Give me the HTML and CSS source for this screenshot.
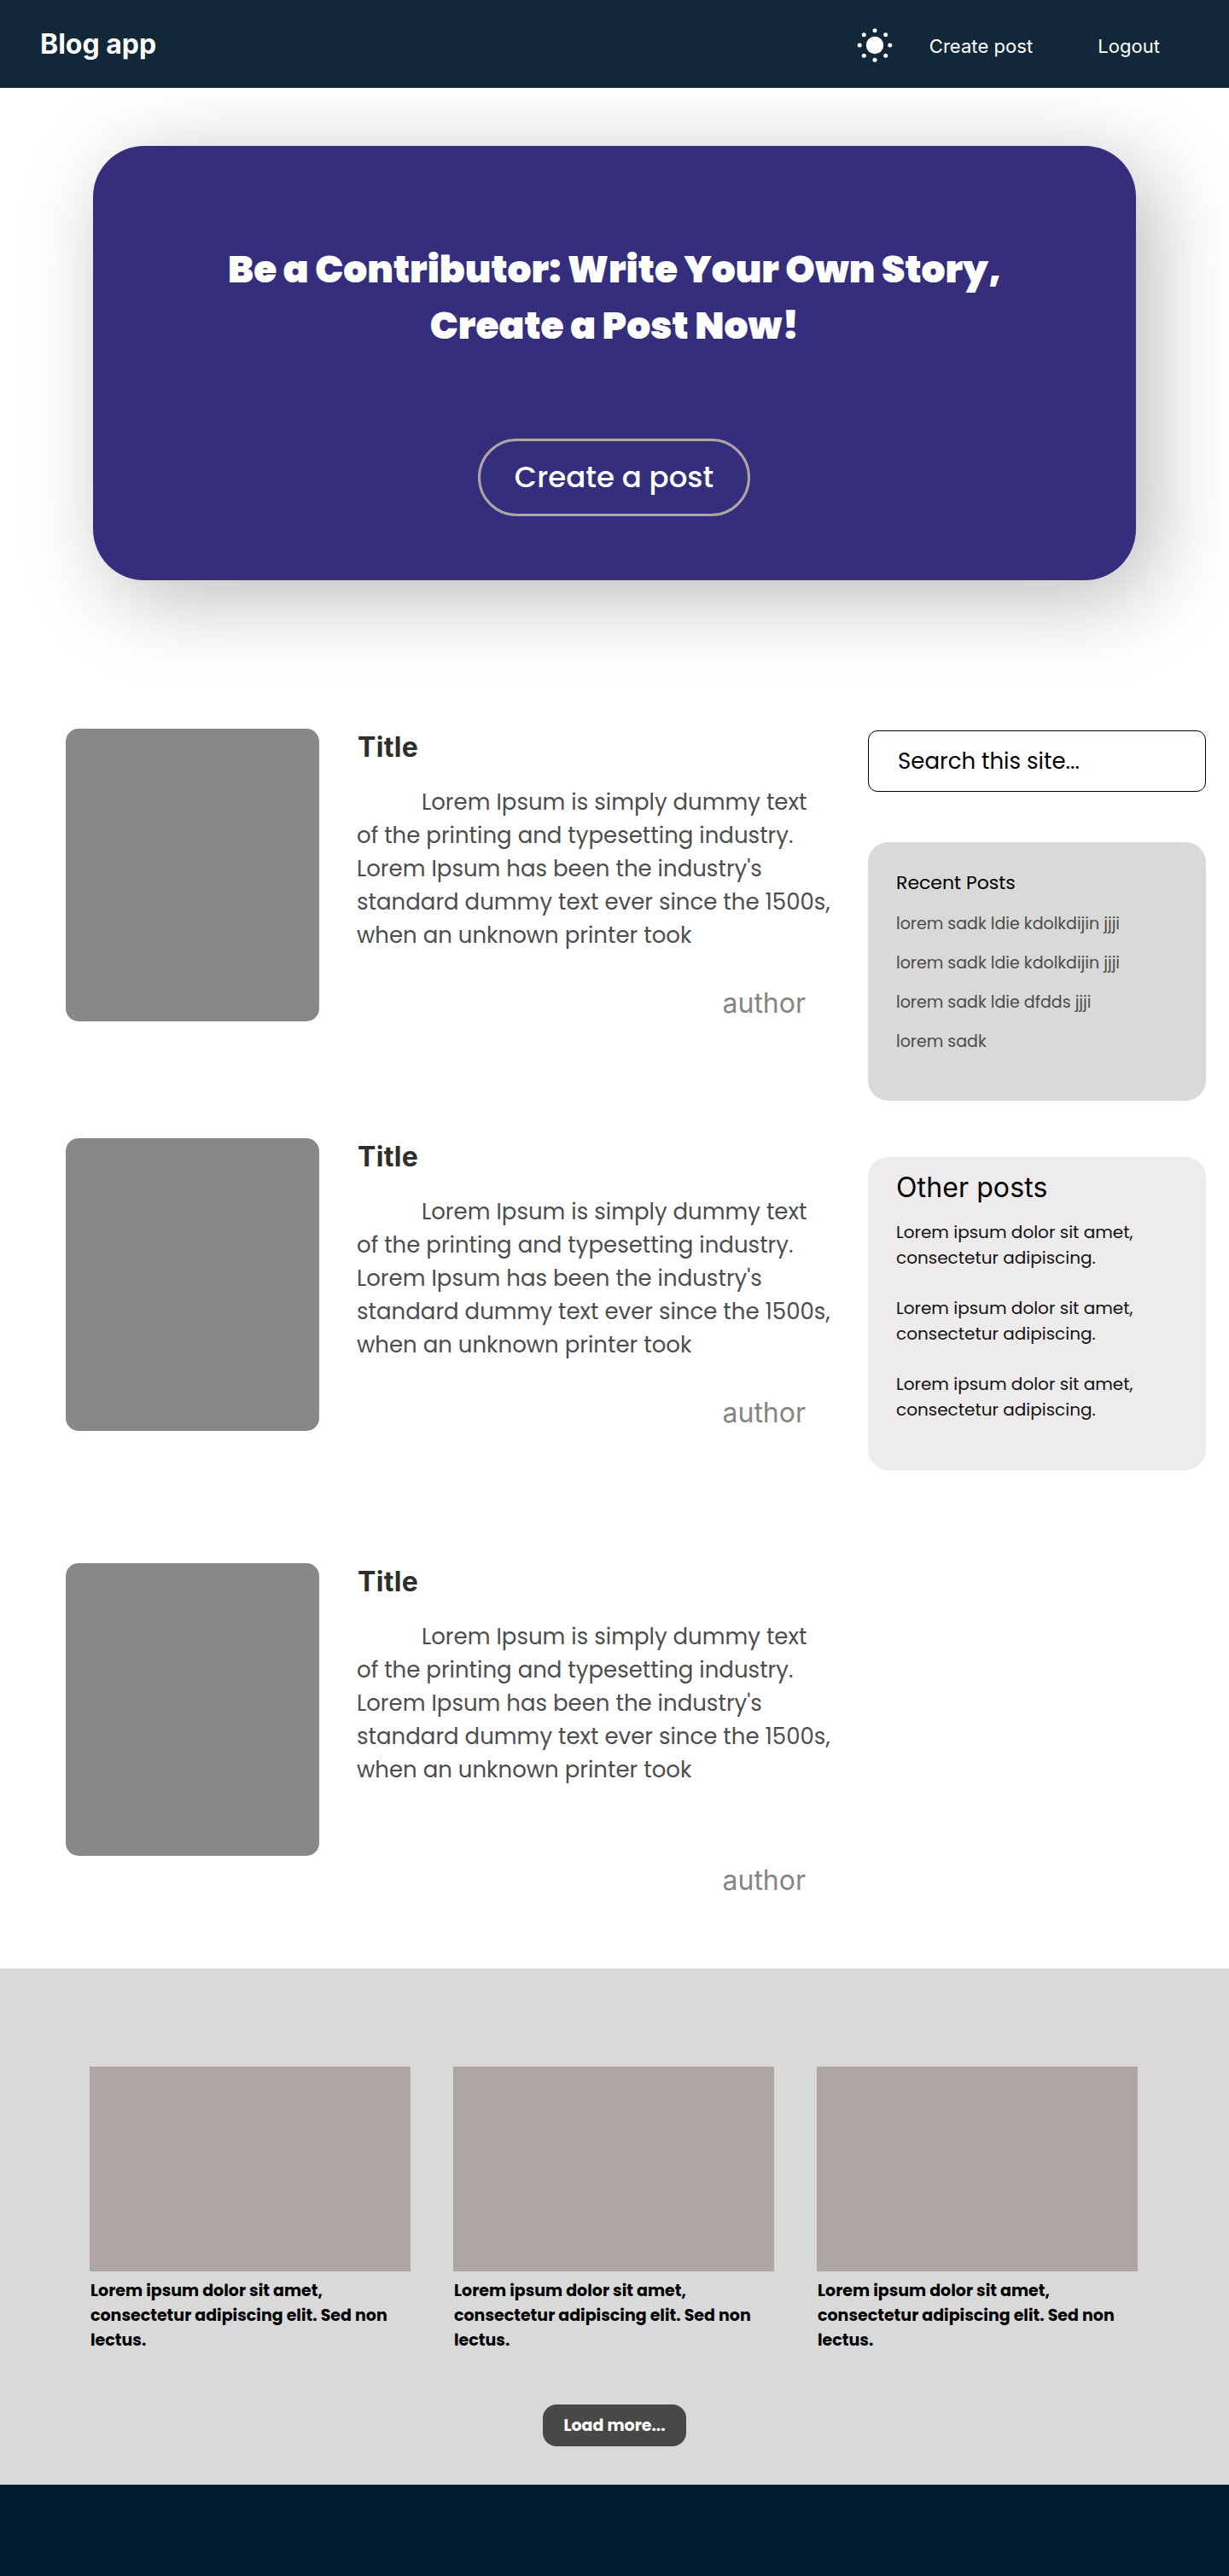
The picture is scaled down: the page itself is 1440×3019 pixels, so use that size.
FILE: index.html
```
<!DOCTYPE html>
<html lang="en">
<head>
  <meta charset="utf-8">
  <title>Blog app</title>
  <link rel="stylesheet" href="styles.css">
</head>
<body>
  <header class="header">
    <a class="brand">Blog app</a>
    <nav class="nav">
      <svg class="sun" viewBox="0 0 44 44" fill="#fff" aria-hidden="true">
        <circle cx="22" cy="22" r="10.2"/>
        <circle cx="22" cy="4.8" r="2.5"/>
        <circle cx="22" cy="39.2" r="2.5"/>
        <circle cx="4.2" cy="22" r="2.5"/>
        <circle cx="39.8" cy="22" r="2.5"/>
        <circle cx="9.3" cy="9.8" r="2.5"/>
        <circle cx="34.7" cy="9.8" r="2.5"/>
        <circle cx="9.3" cy="34.2" r="2.5"/>
        <circle cx="34.7" cy="34.2" r="2.5"/>
      </svg>
      <a class="nav-link">Create post</a>
      <a class="nav-link">Logout</a>
    </nav>
  </header>

  <section class="hero">
    <h1 class="hero-title">Be a Contributor: Write Your Own Story,<br>Create a Post Now!</h1>
    <a class="hero-button">Create a post</a>
  </section>

  <main class="main">
    <div class="posts">
      <article class="post">
        <div class="post-image"></div>
        <div class="post-body">
          <h2 class="post-title">Title</h2>
          <p class="post-text">Lorem Ipsum is simply dummy text<br>of the printing and typesetting industry.<br>Lorem Ipsum has been the industry's<br>standard dummy text ever since the 1500s,<br>when an unknown printer took</p>
          <p class="post-author">author</p>
        </div>
      </article>
      <article class="post">
        <div class="post-image"></div>
        <div class="post-body">
          <h2 class="post-title">Title</h2>
          <p class="post-text">Lorem Ipsum is simply dummy text<br>of the printing and typesetting industry.<br>Lorem Ipsum has been the industry's<br>standard dummy text ever since the 1500s,<br>when an unknown printer took</p>
          <p class="post-author">author</p>
        </div>
      </article>
      <article class="post post-last">
        <div class="post-image"></div>
        <div class="post-body">
          <h2 class="post-title">Title</h2>
          <p class="post-text">Lorem Ipsum is simply dummy text<br>of the printing and typesetting industry.<br>Lorem Ipsum has been the industry's<br>standard dummy text ever since the 1500s,<br>when an unknown printer took</p>
          <p class="post-author">author</p>
        </div>
      </article>
    </div>

    <aside class="sidebar">
      <div class="search">Search this site...</div>
      <section class="recent">
        <h3 class="recent-title">Recent Posts</h3>
        <ul class="recent-list">
          <li>lorem sadk ldie kdolkdijin jjji</li>
          <li>lorem sadk ldie kdolkdijin jjji</li>
          <li>lorem sadk ldie dfdds jjji</li>
          <li>lorem sadk</li>
        </ul>
      </section>
      <section class="other">
        <h3 class="other-title">Other posts</h3>
        <p class="other-text">Lorem ipsum dolor sit amet,<br>consectetur adipiscing.</p>
        <p class="other-text">Lorem ipsum dolor sit amet,<br>consectetur adipiscing.</p>
        <p class="other-text">Lorem ipsum dolor sit amet,<br>consectetur adipiscing.</p>
      </section>
    </aside>
  </main>

  <section class="more">
    <div class="cards">
      <article>
        <div class="card-image"></div>
        <p class="card-text">Lorem ipsum dolor sit amet,<br>consectetur adipiscing elit. Sed non<br>lectus.</p>
      </article>
      <article>
        <div class="card-image"></div>
        <p class="card-text">Lorem ipsum dolor sit amet,<br>consectetur adipiscing elit. Sed non<br>lectus.</p>
      </article>
      <article>
        <div class="card-image"></div>
        <p class="card-text">Lorem ipsum dolor sit amet,<br>consectetur adipiscing elit. Sed non<br>lectus.</p>
      </article>
    </div>
    <a class="load-more">Load more...</a>
  </section>

  <footer class="footer"></footer>
</body>
</html>
```
FILE: styles.css
```
* {
  box-sizing: border-box;
}

body,
h1,
h2,
h3,
p,
ul {
  margin: 0;
  padding: 0;
}

body {
  width: 1440px;
  background: #fff;
  color: #000;
  font-family: Poppins, Inter, sans-serif;
  font-weight: 400;
}

/* Header */
.header {
  position: relative;
  z-index: 1;
  display: flex;
  align-items: center;
  justify-content: space-between;
  height: 103px;
  padding: 0 81px 0 47px;
  background: #122737;
  color: #fff;
  font-family: Inter, sans-serif;
}

.brand {
  padding-top: 1px;
  font-size: 32px;
  font-weight: 700;
  line-height: 40px;
}

.nav {
  display: flex;
  align-items: center;
}

.sun {
  width: 44px;
  height: 44px;
  margin: 2px 42px 0 0;
}

.nav-link {
  padding-top: 4px;
  font-size: 22px;
  line-height: 28px;
  letter-spacing: 0.05px;
}

.nav-link + .nav-link {
  margin-left: 76px;
}

/* Hero */
.hero {
  display: flex;
  flex-direction: column;
  align-items: center;
  width: 1222px;
  height: 509px;
  margin: 68px 0 0 109px;
  padding-top: 112px;
  border-radius: 60px;
  background: #352e7d;
  box-shadow: 20px 20px 100px rgba(0, 0, 0, 0.27);
  color: #fff;
  text-align: center;
}

.hero-title {
  font-size: 44px;
  font-weight: 900;
  line-height: 66px;
  white-space: nowrap;
}

.hero-button {
  width: 319px;
  height: 91px;
  margin: 99px 1px 0 0;
  border: 3px solid #aea5a5;
  border-radius: 46px;
  font-size: 34px;
  font-weight: 500;
  line-height: 85px;
}

/* Posts and sidebar */
.main {
  display: flex;
  gap: 39px;
  height: 1627px;
  padding: 174px 0 0 77px;
}

.posts {
  width: 901px;
}

.post {
  display: flex;
  gap: 44px;
  height: 480px;
}

.post-last {
  margin-top: 18px;
}

.post-image {
  width: 297px;
  height: 343px;
  border-radius: 15px;
  background: #888;
}

.post-body {
  width: 560px;
  padding-top: 2px;
}

.post-title {
  padding-left: 1px;
  color: #2e2e2e;
  font-family: Inter, sans-serif;
  font-size: 32px;
  font-weight: 700;
  line-height: 40px;
  letter-spacing: 0.3px;
}

.post-text {
  margin-top: 25px;
  color: #4d4d4d;
  font-size: 26px;
  line-height: 39px;
  text-indent: 76px;
  white-space: nowrap;
}

.post-author {
  margin-top: 40px;
  padding-right: 34px;
  color: #858585;
  font-family: Inter, sans-serif;
  font-size: 32px;
  line-height: 40px;
  text-align: right;
}

.post-last .post-author {
  margin-top: 90px;
}

.sidebar {
  width: 396px;
  padding-top: 2px;
}

.search {
  height: 72px;
  padding-left: 34px;
  border: 1px solid #000;
  border-radius: 11px;
  font-size: 26px;
  line-height: 70px;
}

.recent {
  height: 303px;
  margin-top: 59px;
  padding: 33px 0 0 33px;
  border-radius: 24px;
  background: #d9d9d9;
}

.recent-title {
  font-size: 22px;
  font-weight: 400;
  line-height: 30px;
}

.recent-list {
  margin-top: 10px;
  color: #4a4a4a;
  font-size: 19px;
  line-height: 46px;
  list-style: none;
}

.other {
  height: 367px;
  margin-top: 66px;
  padding: 16px 0 0 33px;
  border-radius: 24px;
  background: #edebeb;
}

.other-title {
  font-family: Inter, sans-serif;
  font-size: 32px;
  font-weight: 400;
  line-height: 40px;
  letter-spacing: 0.1px;
}

.other-text {
  margin: 17px 0 29px;
  color: #111;
  font-size: 20px;
  line-height: 30px;
}

.other-text + .other-text {
  margin-top: 0;
}

/* More posts */
.more {
  display: flex;
  flex-direction: column;
  align-items: center;
  height: 605px;
  padding-top: 115px;
  background: #d9d9d9;
}

.cards {
  display: grid;
  grid-template-columns: repeat(3, 376px);
  gap: 50px;
  height: 396px;
  margin-right: 2px;
}

.card-image {
  height: 240px;
  background: #aea5a5;
}

.card-text {
  margin-top: 9px;
  padding-left: 1px;
  font-size: 19px;
  font-weight: 700;
  line-height: 28.8px;
}

.load-more {
  width: 168px;
  height: 49px;
  border-radius: 16px;
  background: #484848;
  color: #fff;
  font-size: 19px;
  font-weight: 700;
  line-height: 49px;
  text-align: center;
}

.footer {
  height: 107px;
  background: #001c2f;
}
```
